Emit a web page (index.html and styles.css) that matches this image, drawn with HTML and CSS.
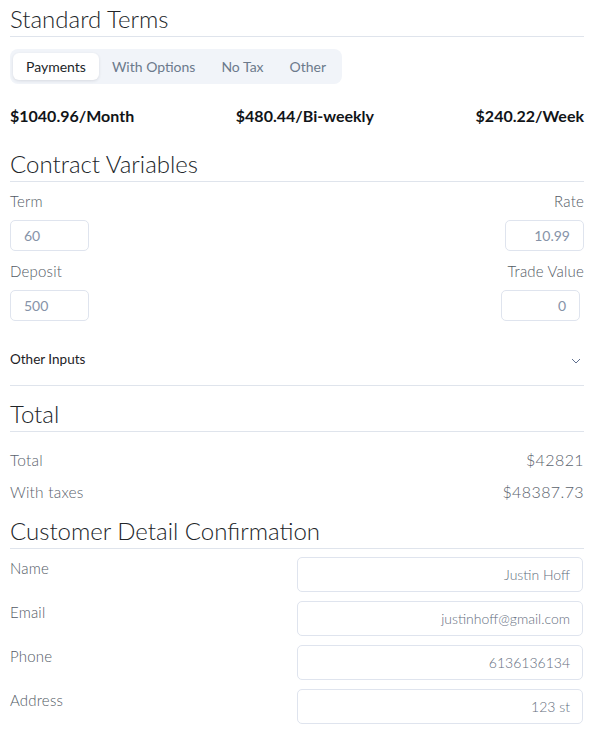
FILE: index.html
```html
<!DOCTYPE html>
<html>
<head>
<meta charset="utf-8">
<link rel="stylesheet" href="styles.css">
</head>
<body>
<div class="page">
  <h2 class="heading h-first">Standard Terms</h2>
  <div class="tabs">
    <span class="tab active">Payments</span>
    <span class="tab">With Options</span>
    <span class="tab">No Tax</span>
    <span class="tab">Other</span>
  </div>
  <div class="payments">
    <span>$1040.96/Month</span>
    <span>$480.44/Bi-weekly</span>
    <span>$240.22/Week</span>
  </div>

  <h2 class="heading h-contract">Contract Variables</h2>
  <div class="vars">
    <div class="col">
      <label class="lbl">Term</label>
      <div class="inp">60</div>
      <label class="lbl">Deposit</label>
      <div class="inp">500</div>
    </div>
    <div class="col col-right">
      <label class="lbl">Rate</label>
      <div class="inp inp-r">10.99</div>
      <label class="lbl">Trade Value</label>
      <div class="inp inp-r inp-trade">0</div>
    </div>
  </div>
  <div class="accordion">
    <span>Other Inputs</span>
    <svg class="chev" width="10" height="6" viewBox="0 0 10 6"><path d="M1 1l4 4 4-4" fill="none" stroke="#5f6f8f" stroke-width="1"/></svg>
  </div>

  <h2 class="heading h-total">Total</h2>
  <div class="totals">
    <div class="trow"><span>Total</span><span class="tval">$42821</span></div>
    <div class="trow"><span>With taxes</span><span class="tval">$48387.73</span></div>
  </div>

  <h2 class="heading h-cust">Customer Detail Confirmation</h2>
  <div class="cust">
    <div class="crow"><span class="clbl">Name</span><div class="cinp">Justin Hoff</div></div>
    <div class="crow"><span class="clbl">Email</span><div class="cinp">justinhoff@gmail.com</div></div>
    <div class="crow"><span class="clbl">Phone</span><div class="cinp">6136136134</div></div>
    <div class="crow"><span class="clbl">Address</span><div class="cinp">123 st</div></div>
  </div>
</div>
</body>
</html>
```

FILE: styles.css
```css
* { box-sizing: border-box; }
body {
  margin: 0;
  background: #ffffff;
  font-family: "Lato", "Open Sans", sans-serif;
  color: #212529;
}
.page {
  padding: 0 6px 0 10px;
}
.heading {
  margin: 0;
  font-size: 24px;
  font-weight: 300;
  line-height: 30px;
  padding-bottom: 2px;
  border-bottom: 1px solid #dfe4ec;
  color: #212529;
}
.h-first { margin-top: 4px; }
.h-contract { margin-top: 23px; }
.h-total { margin-top: 13px; }
.h-cust { margin-top: 8px; }

.tabs {
  margin-top: 12px;
  display: inline-flex;
  background: #f1f4f9;
  border-radius: 8px;
  padding: 4px 3px;
}
.tab {
  font-size: 14px;
  line-height: 27px;
  padding: 0 13px;
  color: #6c7a8c;
  border-radius: 6px;
}
.tab.active {
  background: #ffffff;
  color: #212529;
  box-shadow: 0 1px 3px rgba(30, 40, 60, 0.12);
}

.payments {
  margin-top: 22px;
  display: flex;
  justify-content: space-between;
  font-size: 16px;
  font-weight: 700;
  line-height: 20px;
  color: #111418;
}

.vars {
  margin-top: 9px;
  display: flex;
  justify-content: space-between;
}
.col {
  display: flex;
  flex-direction: column;
  align-items: flex-start;
}
.col-right { align-items: flex-end; }
.lbl {
  font-size: 15px;
  line-height: 20px;
  color: #525a64;
  font-weight: 300;
  letter-spacing: 0.2px;
}
.inp {
  margin: 9px 0 10px;
  width: 79px;
  height: 31px;
  border: 1px solid #dfe4ee;
  border-radius: 5px;
  padding: 0 13px;
  font-size: 14px;
  line-height: 29px;
  color: #8693a8;
  font-weight: 400;
}
.inp-r { text-align: right; padding: 0 13px; }
.inp-trade { margin-right: 4px; }
.vars .col .inp:last-child { margin-bottom: 0; }

.accordion {
  margin-top: 12px;
  padding: 16px 0;
  display: flex;
  justify-content: space-between;
  align-items: center;
  font-size: 13.5px;
  line-height: 20px;
  color: #1d2125;
  border-bottom: 1px solid #dfe4ec;
}
.chev { margin-right: 3px; margin-top: 3px; }

.totals { margin-top: 12px; }
.trow {
  display: flex;
  justify-content: space-between;
  font-size: 15.5px;
  line-height: 20px;
  padding: 6px 0;
  color: #5a626c;
  font-weight: 300;
  letter-spacing: 0.2px;
}
.tval { color: #5a626c; font-size: 16px; letter-spacing: 0.4px; }

.cust { margin-top: 8px; }
.crow {
  display: flex;
  justify-content: space-between;
  align-items: flex-start;
  height: 35px;
  margin-bottom: 9px;
}
.clbl {
  font-size: 15px;
  line-height: 20px;
  margin-top: 1px;
  color: #525a64;
  font-weight: 300;
  letter-spacing: 0.2px;
}
.cinp {
  width: 286px;
  height: 35px;
  border: 1px solid #dfe4ee;
  border-radius: 5px;
  padding: 0 12px;
  text-align: right;
  font-size: 14px;
  line-height: 33px;
  color: #646e7e;
  font-weight: 300;
  margin-right: 1px;
}
```
